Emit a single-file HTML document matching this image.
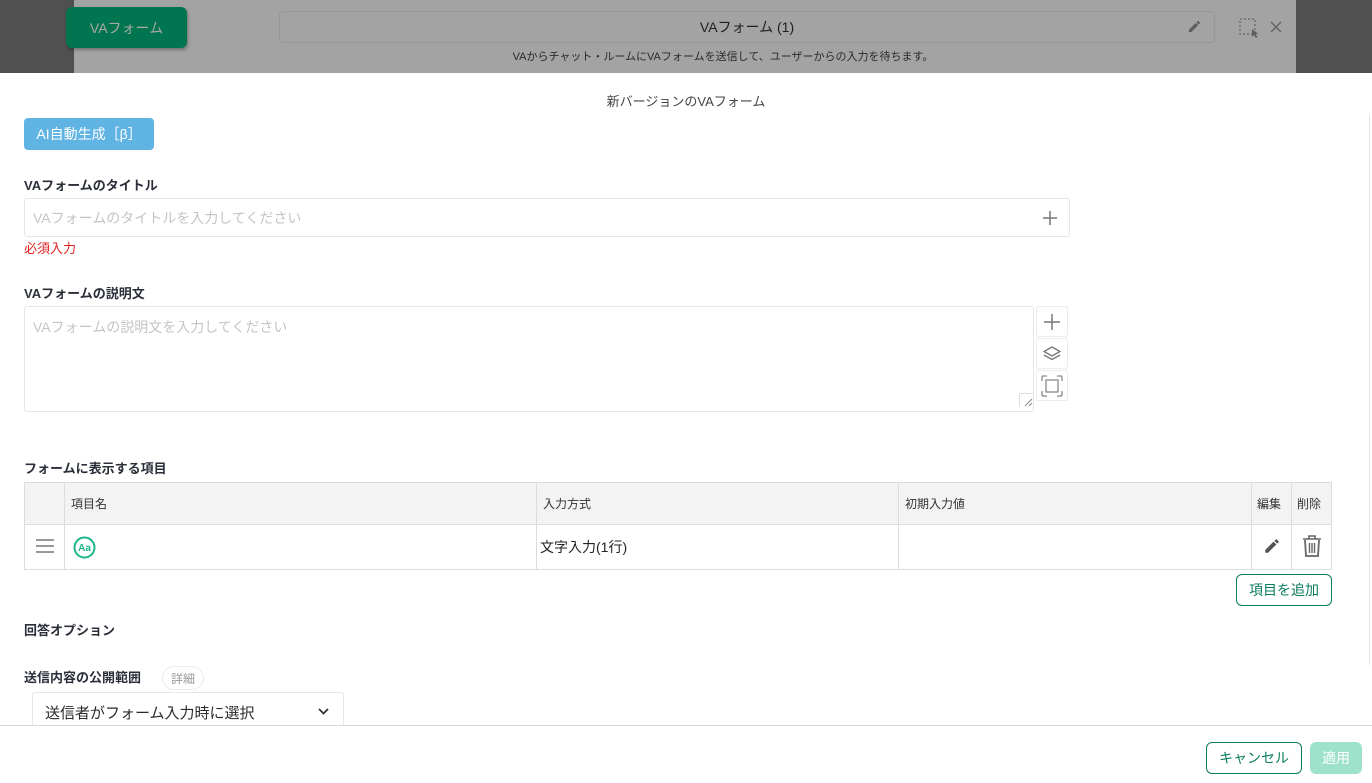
<!DOCTYPE html>
<html><head><meta charset="utf-8"><style>
*{box-sizing:border-box;margin:0;padding:0}
body{width:1372px;height:783px;overflow:hidden;background:#fff;font-family:"Liberation Sans","Noto Sans CJK JP",sans-serif;color:#333;position:relative;font-size:13px}
.abs{position:absolute}
.lbl{position:absolute;left:24px;font-weight:bold;font-size:13px;color:#2b2f3a}
.inp{position:absolute;border:1px solid #e6e6e6;border-radius:3px;background:#fff}
.ph{color:#c4c4c4;font-size:14px}
.ib{position:absolute;left:1036px;width:32px;height:31px;border:1px solid #ececec;border-radius:2px;display:flex;align-items:center;justify-content:center}
table{border-collapse:collapse;position:absolute;left:24px;top:482px;width:1308px}
td{border:1px solid #dcdcdc;font-size:12px;color:#333}
thead td{background:#f3f3f3;height:42px;padding-left:6px}
tbody td{height:45px}
</style></head><body>
<div class="abs" style="left:0;top:0;width:1372px;height:73px;background:#505050"></div>
<div class="abs" style="left:74px;top:0;width:1222px;height:73px;background:#a3a3a3"></div>
<div class="abs" style="left:66px;top:7px;width:121px;height:41px;background:#00754f;border-radius:6px;box-shadow:1px 2px 3px rgba(0,0,0,.3);color:#a8a8a8;font-size:14px;display:flex;align-items:center;justify-content:center">VAフォーム</div>
<div class="abs" style="left:279px;top:11px;width:936px;height:32px;border:1px solid #979797;border-radius:4px;display:flex;align-items:center;justify-content:center;font-size:14px;color:#1f1f1f">VAフォーム (1)</div>
<svg class="abs" style="left:1187px;top:19px" width="15" height="15" viewBox="0 0 24 24"><path d="M3 17.25V21h3.75L17.8 9.94l-3.75-3.75L3 17.25zM20.7 7.04a1 1 0 000-1.41l-2.34-2.34a1 1 0 00-1.41 0l-1.830 1.83 3.75 3.75 1.83-1.83z" fill="#5e5e5e"/></svg>
<svg class="abs" style="left:1239px;top:18px" width="22" height="20"><rect x="1" y="1" width="15" height="15" fill="none" stroke="#666" stroke-width="1.3" stroke-dasharray="2 2"/><path d="M13 11l0 8 2-2 2 3 1.5-1-2-3 3 0z" fill="#5e5e5e"/></svg>
<svg class="abs" style="left:1270px;top:21px" width="12" height="12"><path d="M1 1l10 10M11 1L1 11" stroke="#666" stroke-width="1.5"/></svg>
<div class="abs" style="left:0;top:48px;width:1296px;text-align:center;font-size:11px;color:#2a2a2a;padding-left:150px">VAからチャット・ルームにVAフォームを送信して、ユーザーからの入力を待ちます。</div>

<div class="abs" style="left:0;top:91px;width:1372px;text-align:center;font-size:13px;color:#444">新バージョンのVAフォーム</div>
<div class="abs" style="left:24px;top:118px;width:130px;height:32px;background:#5fb4e3;border-radius:4px;color:#fff;font-size:14px;display:flex;align-items:center;justify-content:center">AI自動生成［β］</div>
<div class="abs" style="left:1369px;top:115px;width:1px;height:550px;background:#e4e4e4"></div>

<div class="lbl" style="top:175px">VAフォームのタイトル</div>
<div class="inp" style="left:24px;top:198px;width:1046px;height:39px;padding:9px 8px"><span class="ph">VAフォームのタイトルを入力してください</span></div>
<svg class="abs" style="left:1042px;top:210px" width="16" height="16"><path d="M8 1v14M1 8h14" stroke="#777" stroke-width="1.5"/></svg>
<div class="abs" style="left:24px;top:238px;color:#e02020;font-size:13px">必須入力</div>

<div class="lbl" style="top:283px">VAフォームの説明文</div>
<div class="inp" style="left:24px;top:306px;width:1010px;height:106px;padding:10px 8px"><span class="ph">VAフォームの説明文を入力してください</span></div>
<div class="abs" style="left:1019px;top:393px;width:14px;height:14px;border-left:1px solid #ddd;border-top:1px solid #ddd"></div>
<svg class="abs" style="left:1024px;top:398px" width="9" height="9"><path d="M1 8L8 1M5 8L8 5" stroke="#888"/></svg>
<div class="ib" style="top:306px"><svg width="18" height="18"><path d="M9 1v16M1 9h16" stroke="#777" stroke-width="1.5"/></svg></div>
<div class="ib" style="top:338px"><svg width="20" height="20"><path d="M10 3l8 4.5-8 4.5-8-4.5z" fill="none" stroke="#777" stroke-width="1.3"/><path d="M2 11l8 4.5 8-4.5" fill="none" stroke="#777" stroke-width="1.3"/></svg></div>
<div class="ib" style="top:370px"><svg width="22" height="22"><path d="M1 6V2a1 1 0 011-1h4M16 1h4a1 1 0 011 1v4M21 16v4a1 1 0 01-1 1h-4M6 21H2a1 1 0 01-1-1v-4" fill="none" stroke="#888" stroke-width="1.3"/><rect x="5" y="5" width="12" height="12" fill="none" stroke="#888" stroke-width="1.3"/></svg></div>

<div class="lbl" style="top:458px">フォームに表示する項目</div>
<table><thead><tr><td style="width:40px"></td><td style="width:472px">項目名</td><td style="width:362px">入力方式</td><td style="width:353px">初期入力値</td><td style="width:40px;padding-left:5px">編集</td><td style="padding-left:5px">削除</td></tr></thead>
<tbody><tr><td style="text-align:center"><svg width="20" height="16"><path d="M1 2h18M1 8h18M1 14h18" stroke="#777" stroke-width="1.6"/></svg></td>
<td style="padding-left:8px"><svg width="23" height="23" viewBox="0 0 23 23" style="vertical-align:middle"><circle cx="11.5" cy="11.5" r="10" fill="none" stroke="#1cb68a" stroke-width="2"/><text x="11.5" y="15" text-anchor="middle" font-size="10" font-weight="bold" fill="#1cb68a" font-family="Liberation Sans">Aa</text></svg></td>
<td style="font-size:14px;padding-left:3px;color:#222">文字入力(1行)</td><td></td>
<td style="text-align:center"><svg width="18" height="18" viewBox="0 0 24 24"><path d="M3 17.25V21h3.75L17.8 9.94l-3.75-3.75L3 17.25zM20.7 7.04a1 1 0 000-1.41l-2.34-2.34a1 1 0 00-1.41 0l-1.83 1.83 3.75 3.75 1.83-1.83z" fill="#555"/></svg></td>
<td style="text-align:center"><svg width="22" height="24" viewBox="0 0 22 24"><path d="M2 5h18M8 5V2h6v3" fill="none" stroke="#666" stroke-width="1.6"/><path d="M4 6l1 16h12l1-16" fill="none" stroke="#666" stroke-width="1.8"/><path d="M8.5 9v10M11 9v10M13.5 9v10" stroke="#666" stroke-width="1.4"/></svg></td></tr></tbody></table>

<div class="abs" style="left:1236px;top:574px;width:96px;height:32px;border:1px solid #0b7c5c;border-radius:6px;color:#0b7c5c;font-size:14px;display:flex;align-items:center;justify-content:center">項目を追加</div>

<div class="lbl" style="top:620px">回答オプション</div>
<div class="lbl" style="top:667px">送信内容の公開範囲</div>
<div class="abs" style="left:162px;top:666px;width:42px;height:24px;border:1px solid #ececec;border-radius:12px;color:#999;font-size:12px;display:flex;align-items:center;justify-content:center">詳細</div>
<div class="inp" style="left:32px;top:692px;width:312px;height:40px;padding:9px 12px;font-size:15px;color:#2a2a2a">送信者がフォーム入力時に選択</div>
<svg class="abs" style="left:318px;top:708px" width="11" height="8"><path d="M1 1l4.5 4.5L10 1" fill="none" stroke="#333" stroke-width="1.8"/></svg>

<div class="abs" style="left:0;top:725px;width:1372px;height:58px;background:#fff;border-top:1px solid #d8d8d8"></div>
<div class="abs" style="left:1206px;top:742px;width:96px;height:32px;border:1px solid #0b7c5c;border-radius:6px;color:#0b7c5c;font-size:14px;display:flex;align-items:center;justify-content:center">キャンセル</div>
<div class="abs" style="left:1310px;top:742px;width:52px;height:32px;background:#9ee2cc;border-radius:6px;color:#fff;font-size:14px;display:flex;align-items:center;justify-content:center">適用</div>
</body></html>
